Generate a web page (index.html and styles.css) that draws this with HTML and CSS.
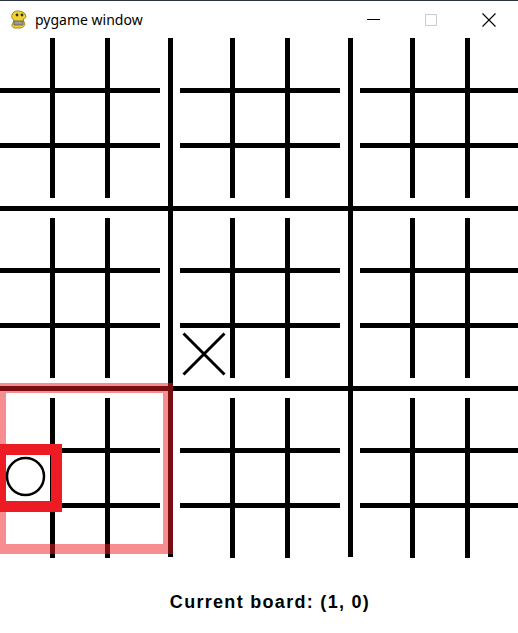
FILE: index.html
```html
<!DOCTYPE html>
<html lang="en">
<head>
  <meta charset="UTF-8">
  <meta name="viewport" content="width=device-width, initial-scale=1.0">
  <title>pygame window</title>
  <link rel="stylesheet" href="styles.css">
</head>
<body>
  <div class="window">
    <!-- Title bar -->
    <div class="titlebar">
      <svg class="app-icon" width="19" height="20" viewBox="0 0 19 20">
        <path d="M5 2 C8 0 14 1 16 4 C18 7 16 9 14 9 L15 12 C17 14 15 18 11 18 L6 18 C3 18 2 15 4 13 L5 10 C2 9 2 4 5 2 Z" fill="#f2d22e" stroke="#8a7a1c" stroke-width="0.9"/>
        <path d="M5 11 L14 11 L14 15 L5 15 Z" fill="#9a9a9a" stroke="#555" stroke-width="0.8"/>
        <circle cx="8" cy="5" r="1.4" fill="#333"/>
        <circle cx="13" cy="5" r="1.4" fill="#333"/>
      </svg>
      <span class="title">pygame window</span>
      <div class="controls">
        <div class="btn">
          <svg width="13" height="13" viewBox="0 0 13 13"><rect x="0" y="6" width="13" height="1" fill="#000"/></svg>
        </div>
        <div class="btn">
          <svg width="12" height="12" viewBox="0 0 12 12"><rect x="0.5" y="0.5" width="11" height="11" fill="none" stroke="#cccccc"/></svg>
        </div>
        <div class="btn">
          <svg width="14" height="14" viewBox="0 0 14 14"><path d="M0.5 0.5 L13.5 13.5 M13.5 0.5 L0.5 13.5" stroke="#000" stroke-width="1.1"/></svg>
        </div>
      </div>
    </div>

    <!-- Game surface -->
    <div class="screen">
      <svg class="board" width="540" height="540" viewBox="0 0 540 540">
        <defs>
          <!-- small 3x3 grid of one big cell -->
          <g id="grid">
            <rect x="50" y="0" width="5" height="160"/>
            <rect x="105" y="0" width="5" height="160"/>
            <rect x="0" y="50" width="160" height="5"/>
            <rect x="0" y="105" width="160" height="5"/>
          </g>
        </defs>
        <g class="lines">
          <use href="#grid" x="0" y="0"/>
          <use href="#grid" x="180" y="0"/>
          <use href="#grid" x="360" y="0"/>
          <use href="#grid" x="0" y="180"/>
          <use href="#grid" x="180" y="180"/>
          <use href="#grid" x="360" y="180"/>
          <use href="#grid" x="0" y="360"/>
          <use href="#grid" x="180" y="360"/>
          <use href="#grid" x="360" y="360"/>
          <!-- big board lines -->
          <rect x="168" y="0" width="5" height="519"/>
          <rect x="348" y="0" width="5" height="519"/>
          <rect x="0" y="168" width="540" height="5"/>
          <rect x="0" y="348" width="540" height="5"/>
        </g>

        <!-- X mark -->
        <path class="mark" d="M183.5 295.5 L224.5 336.5 M224.5 295.5 L183.5 336.5"/>

        <!-- current big board -->
        <rect class="board-hl" x="1" y="350" width="167" height="161"/>
        <!-- current cell -->
        <rect class="cell-hl" x="0.5" y="411.5" width="56" height="57"/>

        <!-- O mark -->
        <circle class="mark" cx="25.5" cy="438.5" r="18.5"/>
      </svg>
      <div class="caption">Current board: (1, 0)</div>
    </div>
  </div>
</body>
</html>
```

FILE: styles.css
```css
/* page */
body {
  margin: 0;
  background: #fff;
  overflow: hidden;
}

.window {
  width: 518px;
  height: 633px;
  overflow: hidden;
}

/* title bar */
.titlebar {
  height: 37px;
  border-top: 1px solid #2b3440;
  display: flex;
  align-items: center;
  background: #fff;
}

.app-icon {
  margin-left: 9px;
  margin-right: 7px;
}

.title {
  font-family: "Noto Sans", sans-serif;
  font-size: 14px;
  color: #000;
}

.controls {
  margin-left: auto;
  display: flex;
}

.btn {
  width: 58px;
  height: 37px;
  display: flex;
  align-items: center;
  justify-content: center;
}

/* game surface */
.screen {
  width: 540px;
}

.board {
  display: block;
}

.lines {
  fill: #000;
  shape-rendering: crispEdges;
}

.mark {
  fill: none;
  stroke: #000;
  stroke-width: 3;
}

circle.mark {
  stroke-width: 2.5;
}

.board-hl {
  fill: none;
  stroke: rgba(237, 28, 36, 0.5);
  stroke-width: 10;
  shape-rendering: crispEdges;
}

.cell-hl {
  fill: none;
  stroke: #ed1c24;
  stroke-width: 11;
  shape-rendering: crispEdges;
}

.caption {
  margin-top: 14px;
  text-align: center;
  font-family: "Liberation Sans", Arial, sans-serif;
  font-weight: bold;
  font-size: 18px;
  line-height: 20px;
  letter-spacing: 1.3px;
  color: #000;
}
```
